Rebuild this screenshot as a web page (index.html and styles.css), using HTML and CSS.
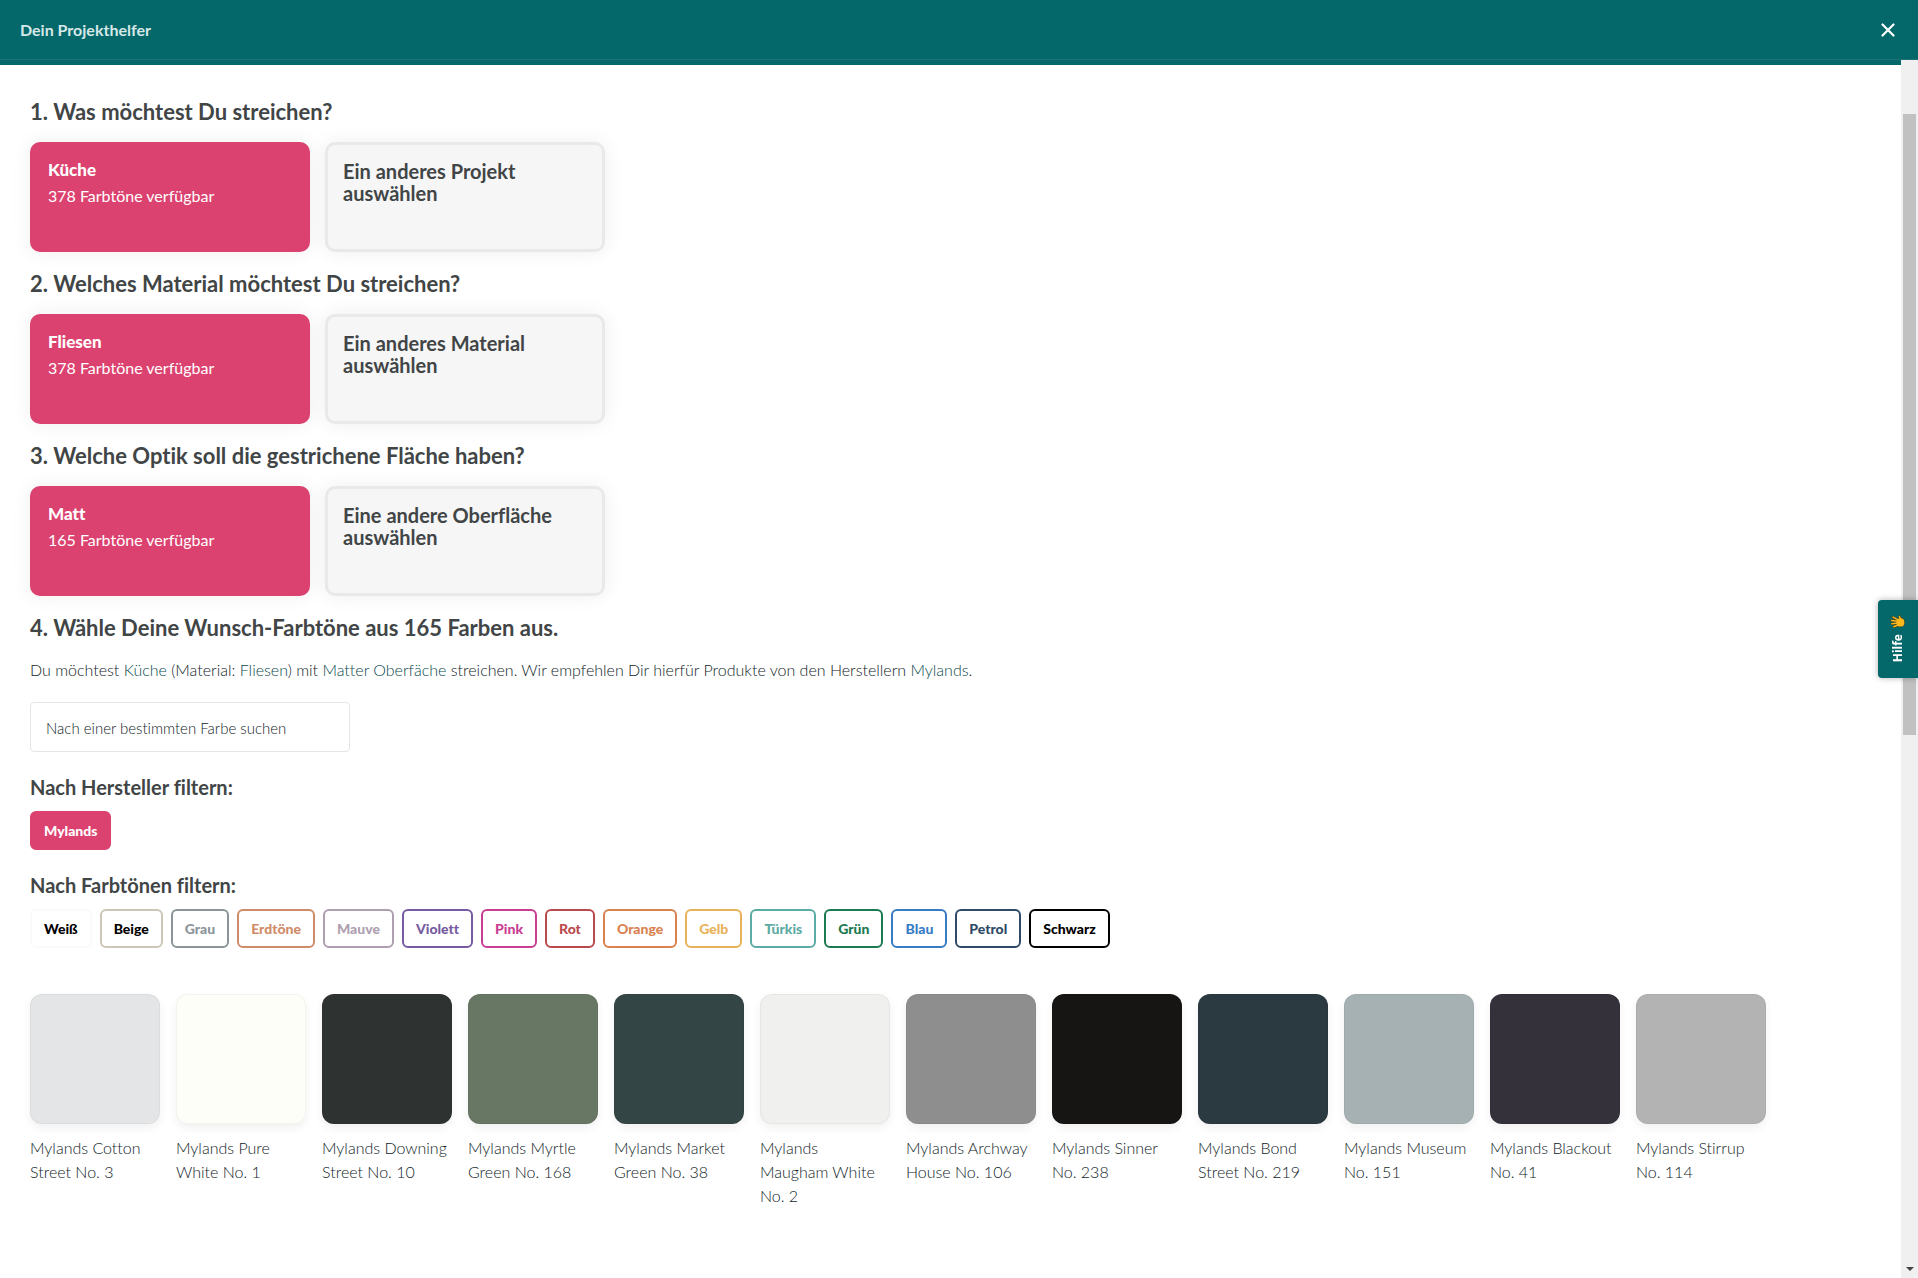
FILE: index.html
```html
<!DOCTYPE html>
<html lang="de">
<head>
<meta charset="utf-8">
<meta name="viewport" content="width=device-width, initial-scale=1">
<title>Dein Projekthelfer</title>
<link rel="stylesheet" href="styles.css">
</head>
<body>
<header class="topbar">
  <span class="topbar-title">Dein Projekthelfer</span>
  <button class="close" type="button" aria-label="Schließen">
    <svg width="14" height="14" viewBox="0 0 14 14"><path d="M1.5 1.5 12.5 12.5M12.5 1.5 1.5 12.5" fill="none" stroke="#fff" stroke-width="2.2" stroke-linecap="round"/></svg>
  </button>
</header>
<div class="viewport">
  <main class="content">
    <section class="step">
      <h2>1. Was möchtest Du streichen?</h2>
      <div class="cards">
        <button class="card selected" type="button"><strong>Küche</strong><span>378 Farbtöne verfügbar</span></button>
        <button class="card other" type="button">Ein anderes Projekt auswählen</button>
      </div>
    </section>
    <section class="step">
      <h2>2. Welches Material möchtest Du streichen?</h2>
      <div class="cards">
        <button class="card selected" type="button"><strong>Fliesen</strong><span>378 Farbtöne verfügbar</span></button>
        <button class="card other" type="button">Ein anderes Material auswählen</button>
      </div>
    </section>
    <section class="step">
      <h2>3. Welche Optik soll die gestrichene Fläche haben?</h2>
      <div class="cards">
        <button class="card selected" type="button"><strong>Matt</strong><span>165 Farbtöne verfügbar</span></button>
        <button class="card other" type="button">Eine andere Oberfläche auswählen</button>
      </div>
    </section>
    <section>
      <h2>4. Wähle Deine Wunsch-Farbtöne aus 165 Farben aus.</h2>
      <p class="summary">Du möchtest <span class="pick">Küche</span> (Material: <span class="pick">Fliesen</span>) mit <span class="pick">Matter Oberfäche</span> streichen. Wir empfehlen Dir hierfür Produkte von den Herstellern <span class="pick">Mylands</span>.</p>
      <input class="search" type="text" placeholder="Nach einer bestimmten Farbe suchen" aria-label="Nach einer bestimmten Farbe suchen">
      <h3>Nach Hersteller filtern:</h3>
      <div class="chips">
        <button class="chip active" type="button">Mylands</button>
      </div>
      <h3>Nach Farbtönen filtern:</h3>
      <div class="chips">
        <button class="chip weiss" type="button">Weiß</button>
        <button class="chip beige" type="button">Beige</button>
        <button class="chip grau" type="button">Grau</button>
        <button class="chip erdtoene" type="button">Erdtöne</button>
        <button class="chip mauve" type="button">Mauve</button>
        <button class="chip violett" type="button">Violett</button>
        <button class="chip pink" type="button">Pink</button>
        <button class="chip rot" type="button">Rot</button>
        <button class="chip orange" type="button">Orange</button>
        <button class="chip gelb" type="button">Gelb</button>
        <button class="chip tuerkis" type="button">Türkis</button>
        <button class="chip gruen" type="button">Grün</button>
        <button class="chip blau" type="button">Blau</button>
        <button class="chip petrol" type="button">Petrol</button>
        <button class="chip schwarz" type="button">Schwarz</button>
      </div>
      <ul class="swatches">
        <li><button type="button" class="swatch cotton" aria-labelledby="c1"></button><span id="c1">Mylands Cotton Street No. 3</span></li>
        <li><button type="button" class="swatch pure" aria-labelledby="c2"></button><span id="c2">Mylands Pure White No. 1</span></li>
        <li><button type="button" class="swatch downing" aria-labelledby="c3"></button><span id="c3">Mylands Downing Street No. 10</span></li>
        <li><button type="button" class="swatch myrtle" aria-labelledby="c4"></button><span id="c4">Mylands Myrtle Green No. 168</span></li>
        <li><button type="button" class="swatch market" aria-labelledby="c5"></button><span id="c5">Mylands Market Green No. 38</span></li>
        <li><button type="button" class="swatch maugham" aria-labelledby="c6"></button><span id="c6">Mylands Maugham White No. 2</span></li>
        <li><button type="button" class="swatch archway" aria-labelledby="c7"></button><span id="c7">Mylands Archway House No. 106</span></li>
        <li><button type="button" class="swatch sinner" aria-labelledby="c8"></button><span id="c8">Mylands Sinner No. 238</span></li>
        <li><button type="button" class="swatch bond" aria-labelledby="c9"></button><span id="c9">Mylands Bond Street No. 219</span></li>
        <li><button type="button" class="swatch museum" aria-labelledby="c10"></button><span id="c10">Mylands Museum No. 151</span></li>
        <li><button type="button" class="swatch blackout" aria-labelledby="c11"></button><span id="c11">Mylands Blackout No. 41</span></li>
        <li><button type="button" class="swatch stirrup" aria-labelledby="c12"></button><span id="c12">Mylands Stirrup No. 114</span></li>
      </ul>
    </section>
  </main>
  <div class="track" aria-hidden="true">
    <div class="thumb"></div>
    <div class="arrow"></div>
  </div>
</div>
<button class="help" type="button">
  <svg width="16" height="14" viewBox="0 0 16 14"><g fill="none" stroke="#3c3a14" stroke-linecap="round" stroke-width="2.4"><path d="M7 4.2 3 2.2M7 6 1.6 5.4M7 8 1.8 8.7M8 9.8 3.8 11.8M11.4 5 9.4 1.6"/></g><ellipse cx="10.4" cy="7.4" rx="4.6" ry="4.8" fill="#3c3a14"/><ellipse cx="10.4" cy="7.4" rx="4" ry="4.2" fill="#fbb91f"/><g fill="none" stroke="#fbb91f" stroke-linecap="round" stroke-width="1.5"><path d="M8 4.9 3 2.2M8 6.2 1.6 5.4M8 8 1.8 8.7M9 9.5 3.8 11.8M11.8 6 9.4 1.6"/></g></svg>
  <span>Hilfe</span>
</button>
</body>
</html>
```
FILE: styles.css
```css
* { box-sizing: border-box; }

body {
  margin: 0;
  min-height: 100vh;
  display: flex;
  flex-direction: column;
  background: #fff;
  color: #414546;
  font-family: Lato, "Open Sans", sans-serif;
  font-size: 16px;
  font-variant-ligatures: none;
}

button, input { font-family: inherit; font-variant-ligatures: inherit; margin: 0; }
button { cursor: pointer; }

.topbar {
  height: 60px;
  padding: 0 20px;
  display: flex;
  align-items: center;
  justify-content: space-between;
  background: #046769;
  border-bottom: 1px solid #1d7173;
}

.topbar-title { color: #d6e8e8; font-size: 16px; font-weight: 700; }

.close {
  display: flex;
  padding: 3px;
  background: none;
  border: 0;
}

.viewport { flex: 1; display: flex; }

.content {
  flex: 1;
  min-width: 0;
  border-top: 5px solid #046769;
  padding: 32px 30px 40px;
}

h2 {
  margin: 0 0 15px;
  font-size: 22px;
  line-height: 30px;
  font-weight: 700;
}

h3 {
  margin: 20px 0 9px;
  font-size: 20px;
  line-height: 30px;
  font-weight: 700;
}

.step { margin-bottom: 17px; }

.cards { display: flex; gap: 15px; }

.card {
  width: 280px;
  height: 110px;
  display: flex;
  flex-direction: column;
  align-items: flex-start;
  border-radius: 10px;
  text-align: left;
  box-shadow: 0 0 20px rgba(0, 0, 0, .07);
}

.selected {
  padding: 15px 18px;
  background: #dc4270;
  border: 0;
  color: #fff;
  font-size: 16px;
  line-height: 26px;
  font-weight: 400;
}

.selected strong { font-size: 17px; font-weight: 900; }

.other {
  padding: 15px;
  background: #f6f6f6;
  border: 3px solid #e9e9ea;
  color: #414546;
  font-size: 20px;
  line-height: 22px;
  font-weight: 700;
}

.summary {
  margin: 0 0 20px;
  font-size: 16px;
  line-height: 24px;
  font-weight: 300;
  color: #102428;
}

.pick { color: #0a4a4d; }

.search {
  display: block;
  width: 320px;
  height: 50px;
  padding: 2px 15px 0;
  border: 1px solid #e5e5e5;
  border-radius: 4px;
  background: #fff;
  font-size: 15px;
  font-weight: 300;
}

.search::placeholder { color: #102428; opacity: 1; }

.chips { display: flex; flex-wrap: wrap; gap: 8px; }

.chip {
  height: 39px;
  padding: 0 12px;
  border: 2px solid;
  border-radius: 6px;
  background: #fff;
  font-size: 14px;
  font-weight: 900;
}

.active { background: #dc4270; border-color: #dc4270; color: #fff; }
.weiss { color: #000; border-color: #fafafa; }
.beige { color: #000; border-color: #cdc5b5; }
.grau { color: #8b9599; }
.erdtoene { color: #d08b68; }
.mauve { color: #ae9fb0; }
.violett { color: #775ba0; }
.pink { color: #c83e92; }
.rot { color: #ba4a4e; }
.orange { color: #d9824f; }
.gelb { color: #e8b25a; }
.tuerkis { color: #5caba5; }
.gruen { color: #1c7a50; }
.blau { color: #397cc6; }
.petrol { color: #2f4a66; }
.schwarz { color: #000; }

.swatches {
  margin: 46px 0 0;
  padding: 0;
  list-style: none;
  display: flex;
  flex-wrap: wrap;
  gap: 16px;
}

.swatches li {
  width: 130px;
  display: flex;
  flex-direction: column;
  gap: 12px;
  font-size: 16px;
  line-height: 24px;
  font-weight: 300;
  color: #102428;
}

.swatch {
  width: 130px;
  height: 130px;
  border: 1px solid rgba(0, 0, 0, .04);
  border-radius: 12px;
  box-shadow: 0 4px 10px rgba(0, 0, 0, .06);
}

.cotton { background: #e4e5e7; }
.pure { background: #fdfef8; }
.downing { background: #2e3331; }
.myrtle { background: #687664; }
.market { background: #334544; }
.maugham { background: #f0f0ee; }
.archway { background: #8e8e8e; }
.sinner { background: #161513; }
.bond { background: #2b3940; }
.museum { background: #a5b1b2; }
.blackout { background: #35313b; }
.stirrup { background: #b3b3b3; }

.track {
  width: 17px;
  padding-top: 54px;
  display: flex;
  flex-direction: column;
  align-items: center;
  background: #f0f0f0;
}

.thumb { width: 13px; height: 621px; background: #c1c1c1; }

.arrow {
  margin: auto 0 7px;
  border: 4px solid transparent;
  border-top-color: #444;
  border-bottom: 0;
}

/* Help tab pinned to the window's right edge */
.help {
  position: fixed;
  top: 50%;
  right: 0;
  width: 40px;
  height: 78px;
  transform: translateY(-50%);
  display: flex;
  flex-direction: column;
  align-items: center;
  justify-content: center;
  gap: 5px;
  padding: 0;
  border: 0;
  border-radius: 4px 0 0 4px;
  background: #046769;
  color: #fff;
  font-family: "Noto Sans", sans-serif;
  font-size: 12px;
  line-height: 16px;
  font-weight: 700;
  box-shadow: 0 0 6px rgba(0, 0, 0, .3);
}

.help span { writing-mode: vertical-rl; rotate: 180deg; }
```
